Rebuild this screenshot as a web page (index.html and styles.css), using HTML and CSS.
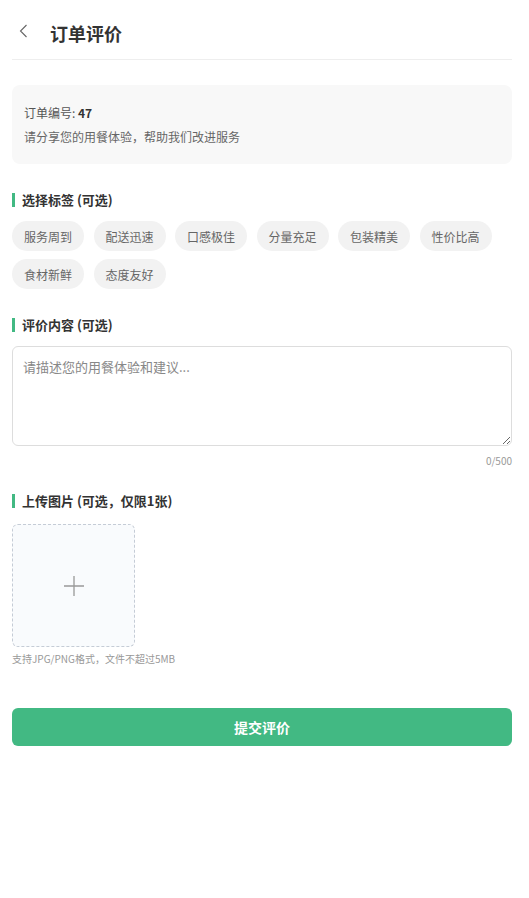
FILE: index.html
```html
<!DOCTYPE html>
<html lang="zh-CN">
<head>
  <meta charset="UTF-8" />
  <meta name="viewport" content="width=device-width, initial-scale=1.0"/>
  <title>订单评价</title>
  <link rel="stylesheet" href="styles.css">
</head>
<body>
  <div class="container">
    <div class="header">
      <span class="back-btn">
        <svg width="9" height="14" viewBox="0 0 9 14"><path d="M7.5 1 L1.5 7 L7.5 13" fill="none" stroke="#666" stroke-width="1.1"/></svg>
      </span>
      <h1>订单评价</h1>
    </div>

    <div class="order-info">
      <div class="order-no">订单编号: <strong>47</strong></div>
      <div class="order-tip">请分享您的用餐体验，帮助我们改进服务</div>
    </div>

    <div class="section">
      <div class="section-title">选择标签 (可选)</div>
      <div class="tags">
        <button class="tag">服务周到</button>
        <button class="tag">配送迅速</button>
        <button class="tag">口感极佳</button>
        <button class="tag">分量充足</button>
        <button class="tag">包装精美</button>
        <button class="tag">性价比高</button>
        <button class="tag">食材新鲜</button>
        <button class="tag">态度友好</button>
      </div>
    </div>

    <div class="section">
      <div class="section-title">评价内容 (可选)</div>
      <textarea class="comment" placeholder="请描述您的用餐体验和建议..."></textarea>
      <div class="counter">0/500</div>
    </div>

    <div class="section">
      <div class="section-title">上传图片 (可选，仅限1张)</div>
      <div class="upload-box">
        <svg width="20" height="20" viewBox="0 0 20 20"><path d="M10 0 V20 M0 10 H20" stroke="#999" stroke-width="1.3"/></svg>
      </div>
      <div class="upload-hint">支持JPG/PNG格式，文件不超过5MB</div>
    </div>

    <button class="submit-btn">提交评价</button>
  </div>
</body>
</html>
```

FILE: styles.css
```css
body {
  margin: 0;
  font-family: "Noto Sans CJK SC", "Liberation Sans", sans-serif;
  background-color: #fff;
  color: #333;
}

.container {
  width: 500px;
  margin-left: 12px;
}

.header {
  display: flex;
  align-items: center;
  box-sizing: border-box;
  height: 60px;
  padding-top: 6px;
  border-bottom: 1px solid #eee;
}

.back-btn {
  display: flex;
  align-items: center;
  margin-left: 7px;
  margin-top: -3px;
  width: 31px;
}

.header h1 {
  margin: 0;
  font-size: 18px;
  font-weight: 700;
  color: #333;
}

.order-info {
  margin-top: 25px;
  background-color: #f8f8f8;
  border-radius: 8px;
  padding: 19px 12px 18px;
}

.order-no {
  font-size: 12px;
  color: #555;
  line-height: 18px;
}

.order-no strong {
  color: #333;
}

.order-tip {
  margin-top: 6px;
  font-size: 12px;
  color: #666;
  line-height: 18px;
}

.section {
  margin-top: 29px;
}

.section-title {
  border-left: 3px solid #42b983;
  padding-left: 7px;
  font-size: 13px;
  font-weight: 700;
  color: #333;
  line-height: 14px;
}

.tags {
  display: flex;
  flex-wrap: wrap;
  gap: 8px 9.5px;
  margin-top: 14px;
}

.tag {
  height: 30px;
  padding: 0 12px;
  border: none;
  border-radius: 15px;
  background-color: #f2f2f2;
  color: #666;
  font-family: inherit;
  font-size: 12px;
}

.comment {
  display: block;
  box-sizing: border-box;
  width: 100%;
  height: 100px;
  margin-top: 14px;
  padding: 10px;
  border: 1px solid #ddd;
  border-radius: 6px;
  font-family: inherit;
  font-size: 13px;
  color: #333;
}

.comment::placeholder {
  color: #888;
}

.counter {
  text-align: right;
  font-size: 10px;
  color: #999;
  margin-top: 7px;
}

.section + .section + .section {
  margin-top: 26px;
}

.upload-box {
  display: flex;
  align-items: center;
  justify-content: center;
  box-sizing: border-box;
  width: 123px;
  height: 123px;
  margin-top: 16px;
  border: 1px dashed #c5ccd6;
  border-radius: 6px;
  background-color: #f9fbfd;
}

.upload-hint {
  margin-top: 4px;
  font-size: 10px;
  color: #999;
}

.submit-btn {
  display: block;
  width: 100%;
  height: 38px;
  margin-top: 42px;
  border: none;
  border-radius: 6px;
  background-color: #42b983;
  color: #fff;
  font-family: inherit;
  font-size: 14px;
  font-weight: 700;
}
```
